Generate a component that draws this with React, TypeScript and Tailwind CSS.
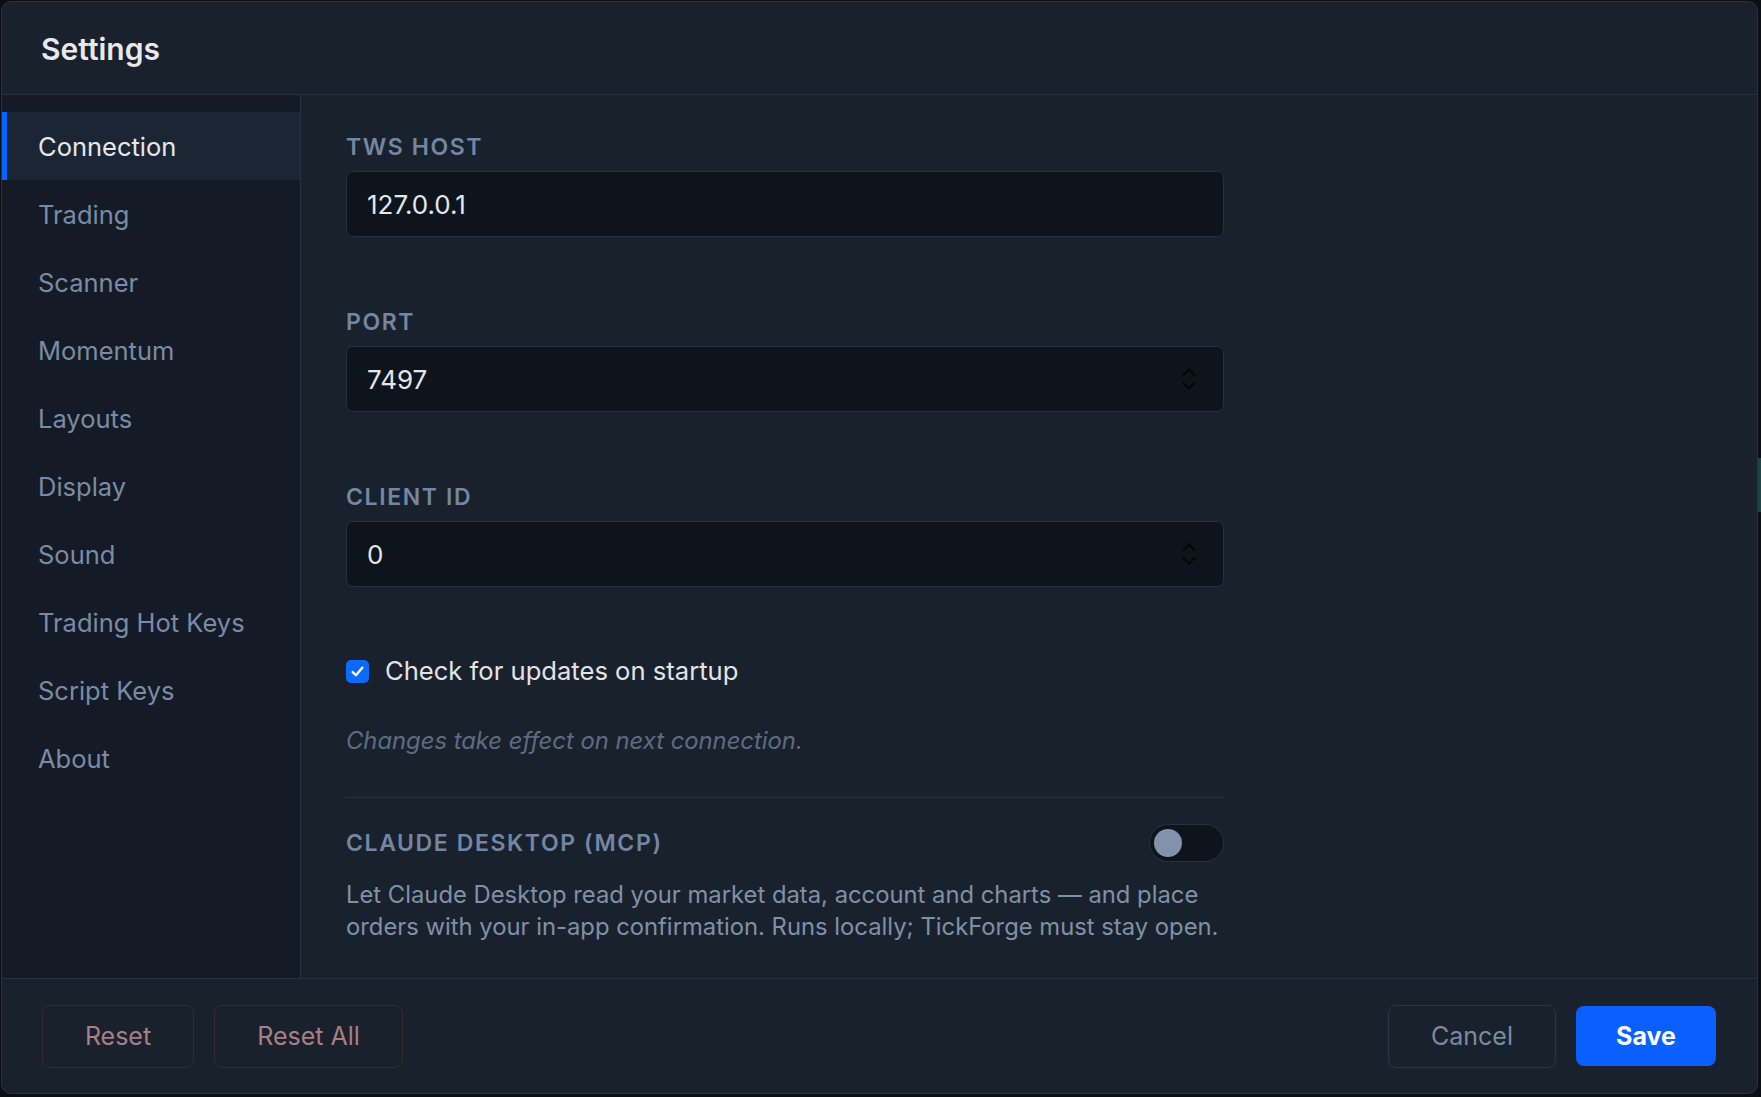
import React from "react";

const NAV = [
  "Connection",
  "Trading",
  "Scanner",
  "Momentum",
  "Layouts",
  "Display",
  "Sound",
  "Trading Hot Keys",
  "Script Keys",
  "About",
];

function Spinner() {
  return (
    <svg width="16" height="26" viewBox="0 0 16 26" fill="none">
      <path d="M2.5 9 L8 3.5 L13.5 9" stroke="#040609" strokeWidth="2.2" strokeLinecap="round" strokeLinejoin="round" />
      <path d="M2.5 17 L8 22.5 L13.5 17" stroke="#040609" strokeWidth="2.2" strokeLinecap="round" strokeLinejoin="round" />
    </svg>
  );
}

function Label({ children }: { children: React.ReactNode }) {
  return (
    <div className="h-[28px] text-[23px] font-semibold uppercase leading-[28px] tracking-[0.07em] text-[#7387a3]">
      {children}
    </div>
  );
}

function Field({ label, value, spinner }: { label: string; value: string; spinner?: boolean }) {
  return (
    <div>
      <Label>{label}</Label>
      <div className="mt-[10px] flex h-[66px] items-center justify-between rounded-[7px] border border-[#243043] bg-[#0e141c] pl-[20px] pr-[26px]">
        <span className="pt-px text-[26px] text-[#e4e6e9]">{value}</span>
        {spinner && <Spinner />}
      </div>
    </div>
  );
}

export default function App() {
  return (
    <div className="relative h-screen w-full bg-[#0b0e13] pb-[3px] pl-px pr-[3px] pt-px font-['Inter',sans-serif]">
      <div className="absolute right-0 top-[458px] h-[54px] w-[3px] bg-[#1c4645]" />
      <div className="flex h-full flex-col overflow-hidden rounded-[10px] border border-[#273244] bg-[#19212d]">
        <header className="flex h-[93px] shrink-0 items-center border-b border-[#253041] px-[39px] pt-[3px]">
          <h1 className="text-[30px] font-semibold text-[#e8e9eb]">Settings</h1>
        </header>

        <div className="flex min-h-0 flex-1">
          <nav className="w-[299px] shrink-0 border-r border-[#253041] bg-[#141b26] pt-[17px]">
            {NAV.map((item, i) => (
              <div
                key={item}
                className={
                  i === 0
                    ? "flex h-[68px] items-center border-l-[5px] border-[#0a62ff] bg-[#1b2634] pl-[31px] pt-[3px] text-[25.5px] text-[#e6e7e9]"
                    : "flex h-[68px] items-center border-l-[5px] border-transparent pl-[31px] pt-[3px] text-[25.5px] text-[#7a8ba5]"
                }
              >
                {item}
              </div>
            ))}
          </nav>

          <main className="flex-1 pl-[45px] pt-[38px]">
            <div className="w-[878px]">
              <Field label="TWS Host" value="127.0.0.1" />
              <div className="mt-[71px]">
                <Field label="Port" value="7497" spinner />
              </div>
              <div className="mt-[71px]">
                <Field label="Client ID" value="0" spinner />
              </div>

              <div className="mt-[69px] flex h-[30px] items-center gap-[16px]">
                <div className="flex h-[23px] w-[23px] items-center justify-center rounded-[5px] bg-[#0b6bff]">
                  <svg width="15" height="15" viewBox="0 0 14 14" fill="none">
                    <path d="M2.5 7.5 L5.6 10.5 L11.5 3.5" stroke="#ffffff" strokeWidth="2.2" strokeLinecap="round" strokeLinejoin="round" />
                  </svg>
                </div>
                <span className="text-[25.6px] text-[#e2e4e7]">Check for updates on startup</span>
              </div>

              <div className="mt-[41px] h-[28px] text-[23.8px] italic leading-[28px] text-[#5d6c82]">
                Changes take effect on next connection.
              </div>

              <div className="mt-[42px] h-px bg-[#263142]" />

              <div className="mt-[26px] flex h-[38px] items-center justify-between">
                <Label>Claude Desktop (MCP)</Label>
                <div className="flex h-[38px] w-[75px] items-center rounded-full border border-[#263244] bg-[#0e141c] pl-[4px]">
                  <div className="h-[28px] w-[28px] rounded-full bg-[#8392ab]" />
                </div>
              </div>

              <p className="mt-[17px] text-[23.8px] leading-[31.5px] text-[#8090a7]">
                Let Claude Desktop read your market data, account and charts — and place orders with your in-app
                confirmation. Runs locally; TickForge must stay open.
              </p>
            </div>
          </main>
        </div>

        <footer className="flex h-[115px] shrink-0 items-center justify-between border-t border-[#253041] pl-[40px] pr-[41px]">
          <div className="flex items-center gap-[20px]">
            <button className="flex h-[63px] w-[152px] items-center justify-center rounded-[8px] border border-[#3a2a2e] pt-[2px] text-[25px] text-[#a87f83]">
              Reset
            </button>
            <button className="flex h-[63px] w-[189px] items-center justify-center rounded-[8px] border border-[#3a2a2e] pt-[2px] text-[25px] text-[#a87f83]">
              Reset All
            </button>
          </div>
          <div className="flex items-center gap-[20px]">
            <button className="flex h-[63px] w-[168px] items-center justify-center rounded-[8px] border border-[#2a3547] pt-[2px] text-[25px] text-[#7b8aa1]">
              Cancel
            </button>
            <button className="flex h-[60px] w-[140px] items-center justify-center rounded-[8px] bg-[#0a60ff] pt-[2px] text-[25px] font-bold text-white">
              Save
            </button>
          </div>
        </footer>
      </div>
    </div>
  );
}
